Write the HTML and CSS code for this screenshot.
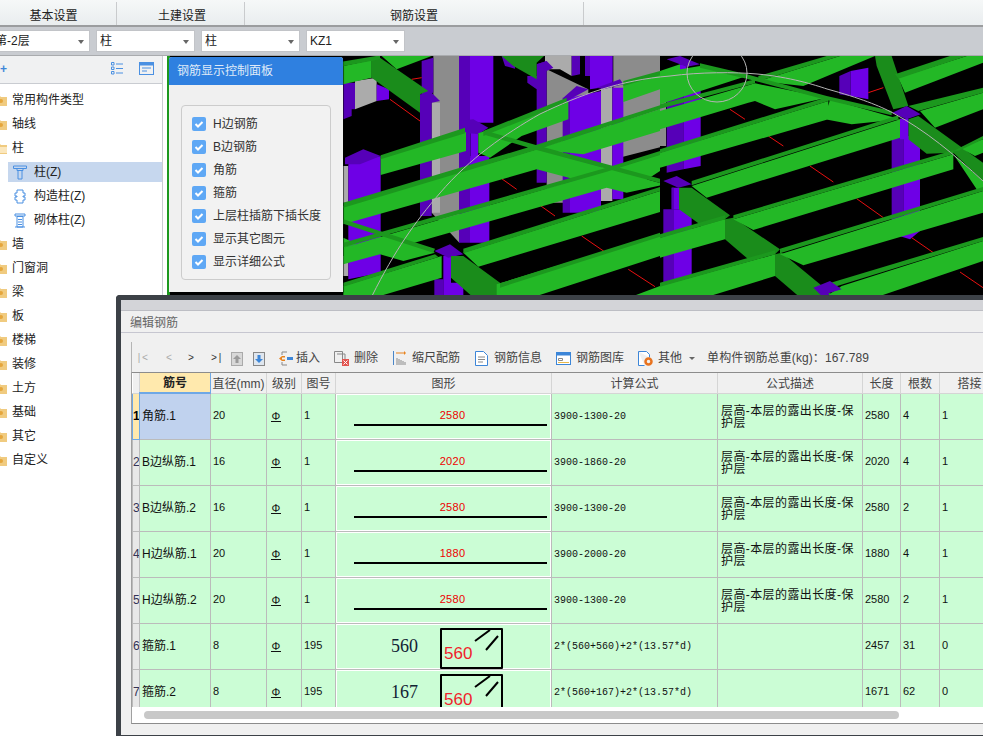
FILE: index.html
```html
<!DOCTYPE html>
<html lang="zh">
<head>
<meta charset="utf-8">
<title>钢筋设置</title>
<link rel="stylesheet" href="styles.css">
</head>
<body>
<div class="app">
  <nav class="tabs">
    <div class="tab t1">基本设置</div>
    <div class="tab t2">土建设置</div>
    <div class="tab t3">钢筋设置</div>
  </nav>
  <div class="selects">
    <div class="sel s1"><span class="cut">第-2层</span></div>
    <div class="sel s2"><span>柱</span></div>
    <div class="sel s2"><span>柱</span></div>
    <div class="sel s3"><span>KZ1</span></div>
  </div>
  <div class="main">
    <aside class="side">
      <div class="side-top">
        <span class="plus">+</span>
        <svg class="ti1" width="12" height="13" viewBox="0 0 12 13"><path class="ic-b" d="M.5 .5h2.500v2.500H.5zM.5 5h2.500v2.500H.5zM.5 9.500h2.500v2.500H.5zM5 2h7M5 6.500h7M5 11h7"/></svg>
        <svg class="ti2" width="15" height="13" viewBox="0 0 15 13"><rect class="ic-b" x=".5" y=".5" width="14" height="12"/><rect class="ic-f" x=".5" y=".5" width="14" height="3"/><path class="ic-b" d="M3 6h9M3 9h5"/></svg>
      </div>
      <ul class="tree">
        <li><svg class="folder" viewBox="0 0 12 11"><path class="fo" d="M0 1h5l1 1h6v9H0z"/><circle class="fc" cx="6" cy="6" r="2"/></svg>常用构件类型</li>
        <li><svg class="folder" viewBox="0 0 12 11"><path class="fo" d="M0 1h5l1 1h6v9H0z"/><circle class="fc" cx="6" cy="6" r="2"/></svg>轴线</li>
        <li><svg class="folder" viewBox="0 0 12 11"><path class="fo" d="M0 1h5l1 1h6v9H0z"/><path class="fl" d="M2 4h10v6H2z"/></svg>柱</li>
        <li class="child on"><svg class="cic" viewBox="0 0 14 14"><path class="ic-b" d="M.5 .5h13v2.500H.5zM4 3v2h6V3M5 5v8.500h4V5"/></svg>柱(Z)</li>
        <li class="child"><svg class="cic" viewBox="0 0 14 15"><path class="ic-b" d="M4 1h6v3h2v3h-2v1h2v3h-2v3H4v-3H2V8h2V7H2V4h2z"/></svg>构造柱(Z)</li>
        <li class="child"><svg class="cic" viewBox="0 0 14 14"><path class="ic-b" d="M2 .5h10v2H2zM4 3h6v10.500H4zM2 13.500h10M5 6h4M5 8.500h4M5 11h4"/></svg>砌体柱(Z)</li>
        <li><svg class="folder" viewBox="0 0 12 11"><path class="fo" d="M0 1h5l1 1h6v9H0z"/><circle class="fc" cx="6" cy="6" r="2"/></svg>墙</li>
        <li><svg class="folder" viewBox="0 0 12 11"><path class="fo" d="M0 1h5l1 1h6v9H0z"/><circle class="fc" cx="6" cy="6" r="2"/></svg>门窗洞</li>
        <li><svg class="folder" viewBox="0 0 12 11"><path class="fo" d="M0 1h5l1 1h6v9H0z"/><circle class="fc" cx="6" cy="6" r="2"/></svg>梁</li>
        <li><svg class="folder" viewBox="0 0 12 11"><path class="fo" d="M0 1h5l1 1h6v9H0z"/><circle class="fc" cx="6" cy="6" r="2"/></svg>板</li>
        <li><svg class="folder" viewBox="0 0 12 11"><path class="fo" d="M0 1h5l1 1h6v9H0z"/><circle class="fc" cx="6" cy="6" r="2"/></svg>楼梯</li>
        <li><svg class="folder" viewBox="0 0 12 11"><path class="fo" d="M0 1h5l1 1h6v9H0z"/><circle class="fc" cx="6" cy="6" r="2"/></svg>装修</li>
        <li><svg class="folder" viewBox="0 0 12 11"><path class="fo" d="M0 1h5l1 1h6v9H0z"/><circle class="fc" cx="6" cy="6" r="2"/></svg>土方</li>
        <li><svg class="folder" viewBox="0 0 12 11"><path class="fo" d="M0 1h5l1 1h6v9H0z"/><circle class="fc" cx="6" cy="6" r="2"/></svg>基础</li>
        <li><svg class="folder" viewBox="0 0 12 11"><path class="fo" d="M0 1h5l1 1h6v9H0z"/><circle class="fc" cx="6" cy="6" r="2"/></svg>其它</li>
        <li><svg class="folder" viewBox="0 0 12 11"><path class="fo" d="M0 1h5l1 1h6v9H0z"/><circle class="fc" cx="6" cy="6" r="2"/></svg>自定义</li>
      </ul>
    </aside>
    <div class="canvas">
      <svg class="scene" width="816" height="240" viewBox="167 56 816 240">
        <rect x="167" y="56" width="816" height="240" fill="#000"/>
        <rect class="m" x="167" y="56" width="3" height="240"/>
        <svg x="340" y="56" width="320" height="240" viewBox="0 0 960 720">
          <path class="gd" d="M280 0H358V560L275 470V140L280 130ZM620 40L745 100V440H620ZM820 0H975V270L820 310Z"/>
          <path class="gl" d="M615 0H695V60L660 40H615ZM45 75L110 65V135L45 160ZM783 90H817V435H783ZM10 330H25V440H10ZM10 600H25V660H10ZM275 140H300V470H275Z"/>
          <path class="pd" d="M245 15L280 5V110L245 115ZM240 115L275 110L300 135L275 140V480H240ZM357 0H390V560H357ZM590 25L620 15V380H590ZM485 0H525V38L495 30ZM562 60H590V100L562 80ZM695 0H720V55L695 60ZM735 0H750V60H735ZM668 125H690V470H668ZM10 80H45V160H35V180L10 190ZM283 670H310V720H283Z"/>
          <path class="pb" d="M390 0H460V200H390ZM390 300H448V560H390ZM750 0H818V90L750 100ZM690 125L783 105V470H690ZM817 95H850V430H817ZM25 325L122 300V650L25 670ZM110 85L147 100V130L110 135ZM392 225H415V305H392ZM310 600H333V720H310ZM333 680H370V720H333Z"/>
          <path class="pd" d="M357 195L400 190L445 215L415 235L378 230ZM378 225H392V305H378ZM670 125L710 90L745 100L690 130ZM770 95L840 70L850 85L790 100ZM15 305L70 280L122 300L60 325H15ZM283 585L330 565L370 595L325 605ZM620 15L640 35L620 45L590 25Z"/>
          <path class="r" d="M150 130L240 195M215 70L245 65M485 368L530 400M600 448L645 480M725 540L795 588M865 640L945 692"/>
          <path class="d" d="M95 10L120 5L265 105L240 115V170L95 65ZM485 0H612L590 20V70L520 30ZM333 600H370L480 680L530 720H395L333 665Z"/>
          <path class="b" d="M10 30L95 12V65L10 85ZM125 0H275L170 40ZM122 305L378 228V285L122 357ZM415 232L685 135V190L545 240L450 305L415 290ZM850 85L960 50V100L850 138ZM10 450L590 280V340L10 505ZM590 280L960 160V225L730 295ZM10 575L800 345V395L260 550L190 570L140 535L10 500ZM10 575L120 545V595L10 625ZM590 280L810 340L975 385L860 410L800 395L590 340ZM10 500L140 535L285 590L190 615L120 595L10 545ZM10 690L305 600V665L120 720H10ZM370 590L960 405V468L415 632ZM800 345L960 295V345L860 410ZM470 685L960 535V600L590 720H470ZM880 720L960 690V720Z"/>
          <path class="m" d="M0 18L120 -2V10L0 32ZM122 298L375 215V232L122 310ZM430 225L680 125V140L430 240ZM850 75L960 45V58L850 90ZM10 440L595 265L960 148V160L595 280L10 455ZM10 560L800 335L960 285V297L800 347L10 574ZM10 680L285 595L295 603L10 692ZM370 578L960 393V405L370 592ZM480 682L960 530V542L480 695ZM440 225L590 268L800 325L975 372L972 384L800 338L590 282L436 237ZM10 490L285 578L280 590L10 503Z"/>
        </svg>
        <svg x="660" y="56" width="323" height="240" viewBox="0 0 969 720">
          <path class="gd" d="M0 100H18V270H0Z"/>
          <path class="pd" d="M20 95H70V340L20 350ZM10 460H42V680L10 690ZM538 60L572 45V120L538 115ZM695 240H730V530L695 520Z"/>
          <path class="pb" d="M70 95L122 105V330L70 340ZM42 460H95V660L42 680ZM572 45L625 35V130L572 120ZM730 240H780V525L750 550L718 540V525L730 520ZM60 25H80V95H60Z"/>
          <path class="r" d="M210 160L255 190M325 240L370 270M450 330L520 378M590 428L670 485M755 545L820 590M900 648L969 695M625 110L670 95"/>
          <path class="d" d="M645 0H695L745 150L700 160L650 30ZM745 190L775 180L969 320V375L880 290L800 293L745 250ZM57 395H95L210 478L195 490L140 520L57 460ZM195 490L220 485L360 580L345 595L265 610L195 550ZM345 595L365 590L480 685L520 720H415L345 660Z"/>
          <path class="b" d="M0 45L60 25V80L0 100ZM120 30L260 60L0 145V50ZM0 165L285 82V135L265 140L0 220ZM295 75L540 0H645L430 90ZM285 82L500 125L345 160L285 135ZM510 130L720 190L575 205L495 190ZM0 290L505 135V190L0 335ZM95 390L720 190V245L140 425ZM220 490L880 295V340L280 522ZM0 545L195 490V550L0 605ZM360 595L969 405V470L430 628ZM0 690L345 595V660L150 720H0ZM545 690L969 555V615L660 720H500ZM715 65L920 0H969V20L735 110ZM780 165L969 110V160L825 215ZM880 295L969 375V400H950ZM900 275L969 250V290L945 300Z"/>
          <path class="m" d="M120 22L260 55L500 120L695 165L695 178L500 132L260 68L120 35ZM0 145L285 70V82L0 158ZM295 60L500 0H540L295 75ZM0 280L505 122V135L0 292ZM95 375L715 178V190L95 388ZM220 478L880 283V295L220 490ZM0 535L195 478V490L0 547ZM360 578L969 393V405L360 592ZM0 680L345 583V595L0 692ZM480 690L969 543V555L500 700ZM705 55L870 0H920L715 68ZM745 150L969 95V110L775 165ZM880 285L969 240V250L895 285Z"/>
          <path class="pb" d="M35 395H57V460H35Z"/>
          <path class="pd" d="M20 10L60 0L120 25L80 32ZM10 375L50 360L95 385L55 395ZM35 395H42V460H35ZM697 170L740 150L782 175L740 190ZM460 695L510 675L545 700L505 712L510 720H485L470 705Z"/>
          <path class="pb" d="M720 188H745V250H720Z"/>
        </svg>
        <path class="arc" d="M372 296C395 250 415 222 440 193C470 158 505 134 540 114C580 95 620 80 670 76C700 72 735 72 757 74C790 77 815 85 827 89C860 98 880 106 893 113C925 130 955 155 983 181"/>
        <ellipse class="arc" cx="717" cy="73" rx="30" ry="29"/>
      </svg>
    </div>
  </div>
</div>

<section class="panel">
  <h2 class="panel-h">钢筋显示控制面板</h2>
  <div class="panel-box">
    <label class="chk"><svg class="cb" viewBox="0 0 14 14"><rect width="14" height="14" rx="2" class="cbb"/><path class="cbc" d="M3.500 7l2.500 2.500 4.500-4.500"/></svg>H边钢筋</label>
    <label class="chk"><svg class="cb" viewBox="0 0 14 14"><rect width="14" height="14" rx="2" class="cbb"/><path class="cbc" d="M3.500 7l2.500 2.500 4.500-4.500"/></svg>B边钢筋</label>
    <label class="chk"><svg class="cb" viewBox="0 0 14 14"><rect width="14" height="14" rx="2" class="cbb"/><path class="cbc" d="M3.500 7l2.500 2.500 4.500-4.500"/></svg>角筋</label>
    <label class="chk"><svg class="cb" viewBox="0 0 14 14"><rect width="14" height="14" rx="2" class="cbb"/><path class="cbc" d="M3.500 7l2.500 2.500 4.500-4.500"/></svg>箍筋</label>
    <label class="chk"><svg class="cb" viewBox="0 0 14 14"><rect width="14" height="14" rx="2" class="cbb"/><path class="cbc" d="M3.500 7l2.500 2.500 4.500-4.500"/></svg>上层柱插筋下插长度</label>
    <label class="chk"><svg class="cb" viewBox="0 0 14 14"><rect width="14" height="14" rx="2" class="cbb"/><path class="cbc" d="M3.500 7l2.500 2.500 4.500-4.500"/></svg>显示其它图元</label>
    <label class="chk"><svg class="cb" viewBox="0 0 14 14"><rect width="14" height="14" rx="2" class="cbb"/><path class="cbc" d="M3.500 7l2.500 2.500 4.500-4.500"/></svg>显示详细公式</label>
  </div>
</section>

<section class="dlg">
  <div class="dlg-band"></div>
  <h2 class="dlg-title">编辑钢筋</h2>
  <div class="tb">
    <span class="nav n1">|&lt;</span><span class="nav n2">&lt;</span><span class="nav n3">&gt;</span><span class="nav n4">&gt;|</span>
    <svg class="tb-up" width="12" height="14" viewBox="0 0 12 14"><rect x=".5" y=".5" width="11" height="13" fill="#d8d8d8" stroke="#aaa"/><path d="M6 3L2 7h2.500v4h3V7H10z" fill="#9a9a9a"/></svg>
    <svg class="tb-dn" width="12" height="14" viewBox="0 0 12 14"><rect x=".5" y=".5" width="11" height="13" fill="#dfe6ee" stroke="#888"/><path d="M6 11l4-4H7.500V3h-3v4H2z" fill="#3d86d8"/></svg>
    <span class="tool t-ins"><svg width="14" height="15" viewBox="0 0 14 15"><path d="M3 1h5M3 14h5M3 1v3M3 11v3" stroke="#888" fill="none"/><path d="M6 5H3L0 7.500 3 10h3V8.500H3V6.500h3z" fill="#e8831f"/><path d="M8 6h6v3H8z" fill="#3d86d8"/></svg>插入</span>
    <span class="tool t-del"><svg width="15" height="15" viewBox="0 0 15 15"><path d="M.5 .5h8v11h-8zM3 3h8v5" stroke="#888" fill="none"/><rect x="8" y="8" width="7" height="7" fill="#e2544f"/><path d="M9.500 9.500l4 4M13.500 9.500l-4 4" stroke="#fff"/></svg>删除</span>
    <span class="tool t-scale"><svg width="13" height="14" viewBox="0 0 13 14"><path d="M.5 0v14" stroke="#4a86c8"/><path d="M3 2h8" stroke="#e8831f"/><path d="M11 0l2 2-2 2z" fill="#e8831f"/><path d="M4 14V7M6 14V8M8 14V9M10 14v-4M12 14v-3" stroke="#8a8a8a"/></svg>缩尺配筋</span>
    <span class="tool t-info"><svg width="13" height="15" viewBox="0 0 13 15"><path d="M.5 .5h8l4 4v10H.5z" fill="#fff" stroke="#3d86d8"/><path d="M3 6h7M3 8.500h7M3 11h5" stroke="#888"/></svg>钢筋信息</span>
    <span class="tool t-lib"><svg width="15" height="13" viewBox="0 0 15 13"><rect x=".5" y=".5" width="14" height="12" fill="#fff" stroke="#3d86d8"/><rect x=".5" y=".5" width="14" height="3" fill="#3d86d8"/><path d="M2.500 6.500h4v2h-4z" fill="none" stroke="#888"/><path d="M2 10.500h11" stroke="#e8b84a"/></svg>钢筋图库</span>
    <span class="tool t-oth"><svg width="15" height="15" viewBox="0 0 15 15"><path d="M.5 .5h8l3 3v3M.5 .5v14h6" fill="#fff" stroke="#3d86d8"/><circle cx="10.500" cy="10.500" r="3" fill="none" stroke="#e8731f" stroke-width="2.500"/></svg>其他</span>
    <span class="caret"></span>
    <span class="tool t-sum">单构件钢筋总重(kg)：167.789</span>
  </div>
  <div class="grid-wrap">
    <div class="grid-view">
      <table class="grid">
        <colgroup><col class="c0"><col class="c1"><col class="c2"><col class="c3"><col class="c4"><col class="c5"><col class="c6"><col class="c7"><col class="c8"><col class="c9"><col class="c10"></colgroup>
        <thead>
          <tr><th class="corner"></th><th class="cur">筋号</th><th>直径(mm)</th><th>级别</th><th>图号</th><th>图形</th><th>计算公式</th><th>公式描述</th><th>长度</th><th>根数</th><th>搭接</th></tr>
        </thead>
        <tbody>
          <tr><th class="rh rh-on">1</th><td class="name sel-c">角筋.1</td><td>20</td><td><span class="gr">Φ</span></td><td>1</td><td class="fig"><div class="bar"><span>2580</span></div></td><td class="f">3900-1300-20</td><td class="desc">层高-本层的露出长度-保护层</td><td>2580</td><td>4</td><td>1</td></tr>
          <tr><th class="rh">2</th><td class="name">B边纵筋.1</td><td>16</td><td><span class="gr">Φ</span></td><td>1</td><td class="fig"><div class="bar"><span>2020</span></div></td><td class="f">3900-1860-20</td><td class="desc">层高-本层的露出长度-保护层</td><td>2020</td><td>4</td><td>1</td></tr>
          <tr><th class="rh">3</th><td class="name">B边纵筋.2</td><td>16</td><td><span class="gr">Φ</span></td><td>1</td><td class="fig"><div class="bar"><span>2580</span></div></td><td class="f">3900-1300-20</td><td class="desc">层高-本层的露出长度-保护层</td><td>2580</td><td>2</td><td>1</td></tr>
          <tr><th class="rh">4</th><td class="name">H边纵筋.1</td><td>20</td><td><span class="gr">Φ</span></td><td>1</td><td class="fig"><div class="bar"><span>1880</span></div></td><td class="f">3900-2000-20</td><td class="desc">层高-本层的露出长度-保护层</td><td>1880</td><td>4</td><td>1</td></tr>
          <tr><th class="rh">5</th><td class="name">H边纵筋.2</td><td>20</td><td><span class="gr">Φ</span></td><td>1</td><td class="fig"><div class="bar"><span>2580</span></div></td><td class="f">3900-1300-20</td><td class="desc">层高-本层的露出长度-保护层</td><td>2580</td><td>2</td><td>1</td></tr>
          <tr><th class="rh">6</th><td class="name">箍筋.1</td><td>8</td><td><span class="gr">Φ</span></td><td>195</td><td class="fig"><div class="stir"><span class="st-n">560</span><div class="st-box"><span>560</span><svg class="st-l" width="26" height="24" viewBox="0 0 26 24"><path d="M1 12L16 1M12 21L24 7" stroke="#000" stroke-width="2" fill="none"/></svg></div></div></td><td class="f">2*(560+560)+2*(13.57*d)</td><td></td><td>2457</td><td>31</td><td>0</td></tr>
          <tr><th class="rh">7</th><td class="name">箍筋.2</td><td>8</td><td><span class="gr">Φ</span></td><td>195</td><td class="fig"><div class="stir"><span class="st-n">167</span><div class="st-box"><span>560</span><svg class="st-l" width="26" height="24" viewBox="0 0 26 24"><path d="M1 12L16 1M12 21L24 7" stroke="#000" stroke-width="2" fill="none"/></svg></div></div></td><td class="f">2*(560+167)+2*(13.57*d)</td><td></td><td>1671</td><td>62</td><td>0</td></tr>
        </tbody>
      </table>
    </div>
    <div class="hscroll"><div class="thumb"></div></div>
  </div>
</section>
</body>
</html>
```

FILE: styles.css
```css
* { box-sizing: border-box; }
html, body { margin: 0; height: 100%; }
body {
  position: relative;
  width: 983px;
  height: 736px;
  overflow: hidden;
  background: #fff;
  font: 12px/1.2 "Liberation Sans", "Noto Sans CJK SC", sans-serif;
  color: #333;
}
h2 { margin: 0; font-weight: 400; font-size: 12px; }
ul { margin: 0; padding: 0; list-style: none; }
svg { display: block; flex: none; }

.app { display: flex; flex-direction: column; height: 736px; }

/* top tabs */
.tabs {
  display: flex;
  height: 27px;
  padding-top: 2px;
  background: linear-gradient(#f6f8f8, #e9edef);
  border-bottom: 2px solid #9b9d9f;
  flex: none;
}
.tab { height: 23px; line-height: 29px; text-align: center; border-right: 1px solid #c9cbcd; color: #222; }
.t1 { width: 117px; padding-right: 9px; }
.t2 { width: 128px; padding-left: 3px; }
.t3 { width: 339px; }

/* select row */
.selects {
  display: flex;
  gap: 6px;
  height: 29px;
  padding-top: 3px;
  background: #c9ccd1;
  border-bottom: 1px solid #a9abae;
  flex: none;
}
.sel {
  position: relative;
  height: 22px;
  line-height: 21px;
  padding-left: 3px;
  background: #fff;
  border: 1px solid #c2c4c8;
  color: #222;
  overflow: hidden;
}
.sel::after {
  content: "";
  position: absolute;
  right: 5px;
  top: 9px;
  border: 3.500px solid transparent;
  border-top: 4px solid #666;
  border-bottom: 0;
}
.s1 { width: 90px; border-left: 0; padding-left: 0; }
.s2 { width: 99px; }
.s3 { width: 99px; }
.cut { display: block; margin-left: -5px; }

.main { display: flex; flex: 1; min-height: 0; }

/* sidebar */
.side { width: 167px; flex: none; background: #fff; position: relative; }
.side::after {
  content: "";
  position: absolute;
  left: 162px;
  top: 0;
  bottom: 0;
  width: 1px;
  background: #c9ccd1;
}
.side-top {
  display: flex;
  align-items: center;
  height: 28px;
  width: 162px;
  background: #f0f1f2;
  border-bottom: 1px solid #c9ccd1;
  padding-bottom: 2px;
}
.plus { color: #3d86d8; font-weight: 700; font-size: 12px; line-height: 14px; }
.ti1 { margin-left: auto; }
.ti2 { margin-left: 16px; margin-right: 8px; }
.ic-b { fill: none; stroke: #4a90e2; stroke-width: 1; }
.ic-f { fill: #4a90e2; }

.tree { padding-top: 4px; width: 162px; }
.tree li {
  display: flex;
  align-items: center;
  height: 24px;
  color: #222;
  white-space: nowrap;
}
.folder { width: 12px; height: 11px; margin-left: -5px; margin-right: 5px; }
.fo { fill: #f0cb80; }
.fc { fill: #e5a63c; }
.fl { fill: #fbe7bd; }
.child { margin-left: 8px; height: 24px; }
.tree .on { background: linear-gradient(transparent 2px, #c6d7ee 2px, #c6d7ee 22px, transparent 22px); }
.cic { width: 14px; height: 15px; margin: 0 7px 0 5px; }

.canvas { flex: 1; overflow: hidden; background: #000; }
.scene { display: block; }
.b { fill: #23b826; }
.d { fill: #1a8c1b; }
.m { fill: #1c981e; }
.gd { fill: #8c8c8c; }
.gl { fill: #ababab; }
.pb { fill: #6e00e6; }
.pd { fill: #5600b8; }
.r { fill: none; stroke: #e81010; stroke-width: 3; }
.arc { fill: none; stroke: #b4b4b4; stroke-width: 1; }

/* floating panel */
.panel {
  position: absolute;
  left: 169px;
  top: 57px;
  width: 174px;
  height: 235px;
  background: #f0f0f0;
  border-radius: 3px 3px 0 0;
  box-shadow: 1px 1px 1px rgba(0, 0, 0, .3);
}
.panel-h {
  height: 28px;
  line-height: 28px;
  padding-left: 8px;
  background: #2f80e0;
  color: #dfeaf8;
  border-radius: 3px 3px 0 0;
}
.panel-box {
  display: flex;
  flex-direction: column;
  gap: 5px;
  width: 150px;
  height: 175px;
  margin: 20px 0 0 12px;
  padding: 9px 0 0 10px;
  background: #f2f2f2;
  border: 1px solid #ccc;
  border-radius: 4px;
}
.chk { display: flex; align-items: center; height: 18px; color: #333; white-space: nowrap; }
.cb { width: 14px; height: 14px; margin-right: 7px; }
.cbb { fill: #5fa8f5; }
.cbc { fill: none; stroke: #fff; stroke-width: 2; }

/* edit dialog */
.dlg {
  position: absolute;
  left: 116px;
  top: 295px;
  width: 900px;
  height: 441px;
  background: #f0f0f0;
  border: solid #3c4147;
  border-width: 5px 0 1px 5px;
  border-radius: 4px 0 0 0;
}
.dlg-band { height: 11px; background: #d3d4d8; border-bottom: 1px solid #bdbec4; }
.dlg-title {
  height: 22px;
  line-height: 24px;
  padding-left: 9px;
  color: #666;
  border-bottom: 1px solid #c6c6d0;
}
.tb {
  position: relative;
  display: flex;
  align-items: center;
  height: 39px;
  margin-left: 10px;
  padding-top: 12px;
  color: #444;
  white-space: nowrap;
}
.tb::before {
  content: "";
  position: absolute;
  left: 0;
  top: 9px;
  bottom: 0;
  width: 1px;
  background: #b5b5b5;
}
.nav { font-family: "Liberation Mono", monospace; font-size: 10px; width: 0; color: #aaa; }
.n1 { margin-left: 5px; }
.n2 { margin-left: 30px; }
.n3 { margin-left: 22px; color: #333; }
.n4 { margin-left: 23px; color: #333; }
.tb-up { margin-left: 20px; }
.tb-dn { margin-left: 10px; }
.tool { display: inline-flex; align-items: center; gap: 5px; }
.t-ins { margin-left: 14px; gap: 3px; }
.t-del { margin-left: 14px; }
.t-scale { margin-left: 15px; gap: 6px; }
.t-info { margin-left: 15px; gap: 6px; }
.t-lib { margin-left: 14px; }
.t-oth { margin-left: 14px; }
.caret {
  margin-left: 7px;
  border: 3px solid transparent;
  border-top: 3px solid #666;
  border-bottom: 0;
}
.t-sum { margin-left: 12px; letter-spacing: .1px; }

.grid-wrap { height: 352px; margin-left: 10px; border-bottom: 1px solid #8c8c8c; border-left: 1px solid #a0a0a0; background: #fff; }
.grid-view { height: 335px; overflow: hidden; border-top: 1px solid #8c8c8c; }
.grid { width: 867px; table-layout: fixed; border-collapse: collapse; font-size: 11px; color: #111; }
.c0 { width: 7px; } .c1 { width: 71px; } .c2 { width: 56px; } .c3 { width: 35px; }
.c4 { width: 34px; } .c5 { width: 216px; } .c6 { width: 166px; } .c7 { width: 145px; }
.c8 { width: 38px; } .c9 { width: 39px; } .c10 { width: 60px; }
.grid thead th {
  height: 20px;
  padding: 2px 0 0;
  background: #f0f0f0;
  border: solid #d5d5d5;
  border-width: 0 1px 1px 0;
  font-weight: 400;
  font-size: 12px;
  color: #444;
  text-align: center;
  white-space: nowrap;
  overflow: hidden;
}
.grid thead .cur { background: #ffe9ad; border-bottom: 2px solid #6ea8e6; border-right: 1px solid #6ea8e6; font-weight: 700; color: #222; }
.grid td {
  height: 46px;
  padding: 0 2px;
  background: #cbfdd5;
  border: 1px solid #bbb;
  vertical-align: middle;
  white-space: nowrap;
  overflow: hidden;
}
.rh {
  padding: 0;
  background: #e8e8e8;
  border: 1px solid #bbb;
  font-weight: 400;
  font-size: 12px;
  color: #335;
  overflow: hidden;
  text-align: left;
}
.rh-on { background: #ffe9ad; border: 1px solid #6ea8e6; font-weight: 700; color: #000; }
.name { font-size: 12px; }
.grid .sel-c { background: #c0d2ee; }
.gr { display: block; width: 10px; margin-left: 2px; border-bottom: 1px solid #111; line-height: 10px; text-align: center; font-size: 11px; }
.f { font: 10px "Liberation Mono", "Noto Sans CJK SC", monospace; }
.grid .desc { white-space: normal; font-size: 12px; line-height: 12px; padding: 2px 3px 0; letter-spacing: .4px; }
.grid .fig { padding: 1px; background: #fff; }
.bar {
  position: relative;
  height: 43px;
  background: #cbfdd5;
  text-align: center;
}
.bar::after {
  content: "";
  position: absolute;
  left: 17px;
  right: 3px;
  top: 29px;
  height: 2px;
  background: #000;
}
.bar span { display: block; padding-top: 14px; padding-left: 18px; color: #ee0000; font-size: 11px; letter-spacing: .3px; line-height: 13px; }
.stir { display: flex; align-items: flex-start; height: 43px; background: #cbfdd5; padding: 3px 0 0 54px; }
.st-n { width: 49px; padding-top: 6px; font: 18px/24px "Liberation Serif", serif; color: #123; }
.st-box { position: relative; width: 63px; height: 41px; border: 2px solid #000; border-radius: 1px; overflow: hidden; }
.st-box span { position: absolute; left: 2px; top: 12px; font-size: 17px; line-height: 24px; color: #f0232b; }
.st-l { position: absolute; right: 1px; top: -1px; }

.hscroll { height: 16px; padding: 4px 0 0 12px; background: #fff; }
.thumb { width: 755px; height: 8px; background: #c8c8c8; border-radius: 4px; }
```
